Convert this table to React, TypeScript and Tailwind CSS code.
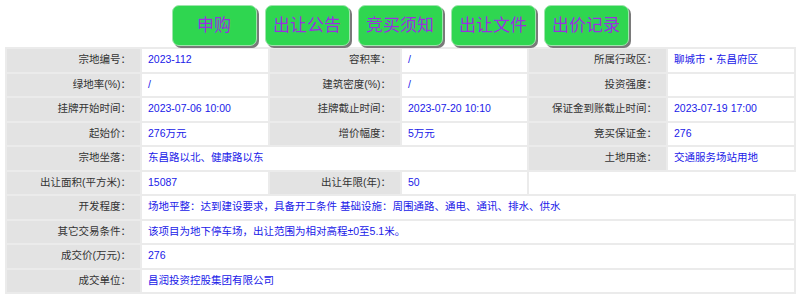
const BUTTONS = ['申购', '出让公告', '竞买须知', '出让文件', '出价记录']

type Cell = { text?: string; label?: boolean; span?: string; blank?: boolean }

const ROWS: Cell[][] = [
  [
    { text: '宗地编号：', label: true },
    { text: '2023-112' },
    { text: '容积率：', label: true },
    { text: '/' },
    { text: '所属行政区：', label: true },
    { text: '聊城市・东昌府区' },
  ],
  [
    { text: '绿地率(%)：', label: true },
    { text: '/' },
    { text: '建筑密度(%)：', label: true },
    { text: '/' },
    { text: '投资强度：', label: true },
    { text: '' },
  ],
  [
    { text: '挂牌开始时间：', label: true },
    { text: '2023-07-06 10:00' },
    { text: '挂牌截止时间：', label: true },
    { text: '2023-07-20 10:10' },
    { text: '保证金到账截止时间：', label: true },
    { text: '2023-07-19 17:00' },
  ],
  [
    { text: '起始价：', label: true },
    { text: '276万元' },
    { text: '增价幅度：', label: true },
    { text: '5万元' },
    { text: '竞买保证金：', label: true },
    { text: '276' },
  ],
  [
    { text: '宗地坐落：', label: true },
    { text: '东昌路以北、健康路以东', span: 'col-span-3' },
    { text: '土地用途：', label: true },
    { text: '交通服务场站用地' },
  ],
  [
    { text: '出让面积(平方米)：', label: true },
    { text: '15087' },
    { text: '出让年限(年)：', label: true },
    { text: '50' },
    { blank: true, span: 'col-span-2' },
  ],
  [
    { text: '开发程度：', label: true },
    { text: '场地平整：达到建设要求，具备开工条件 基础设施：周围通路、通电、通讯、排水、供水', span: 'col-span-5' },
  ],
  [
    { text: '其它交易条件：', label: true },
    { text: '该项目为地下停车场，出让范围为相对高程±0至5.1米。', span: 'col-span-5' },
  ],
  [
    { text: '成交价(万元)：', label: true },
    { text: '276', span: 'col-span-5' },
  ],
  [
    { text: '成交单位：', label: true },
    { text: '昌润投资控股集团有限公司', span: 'col-span-5' },
  ],
]

export default function App() {
  return (
    <div className="w-[800px] h-[298px] bg-white font-['Liberation_Sans','Noto_Sans_CJK_SC',sans-serif] overflow-hidden">
      <div className="flex justify-center gap-2 pt-[5px] h-[47px]">
        {BUTTONS.map((b) => (
          <div
            key={b}
            className="w-[85px] h-[41px] rounded-[7px] bg-[#2fd650] border border-[#9ee6ac] shadow-[2px_2px_0_#7a7a7a] flex items-center justify-center text-[17px] text-[#9a2fe0]"
          >
            {b}
          </div>
        ))}
      </div>

      <div className="ml-[5px] w-[791px] p-[2px] bg-[#ebebeb] grid grid-cols-[133px_126px_130px_125px_137px_126px] auto-rows-[22.5px] gap-[2px]">
        {ROWS.flatMap((row, i) =>
          row.map((c, j) =>
            c.blank ? (
              <div key={`${i}-${j}`} className={`${c.span ?? ''} bg-white -mr-[2px]`} />
            ) : c.label ? (
              <div
                key={`${i}-${j}`}
                className="bg-[#e3e3e3] flex items-center justify-end pr-[9px] text-[10.5px] text-[#333] whitespace-nowrap"
              >
                {c.text}
              </div>
            ) : (
              <div
                key={`${i}-${j}`}
                className={`${c.span ?? ''} bg-white flex items-center pl-[6px] text-[10.5px] text-[#2020e8] whitespace-nowrap`}
              >
                {c.text}
              </div>
            ),
          ),
        )}
      </div>
    </div>
  )
}
